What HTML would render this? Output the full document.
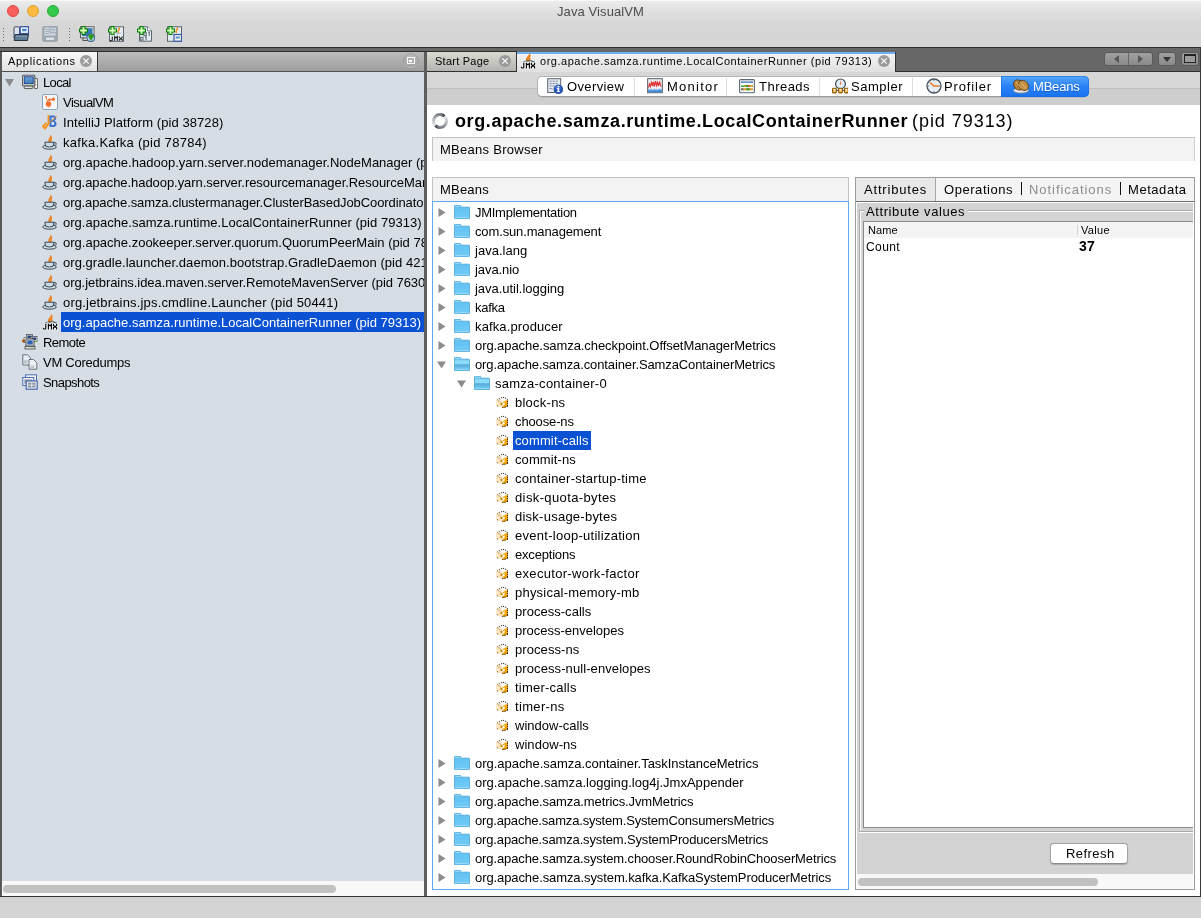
<!DOCTYPE html>
<html><head><meta charset="utf-8"><style>
html,body{margin:0;padding:0;width:1201px;height:918px;overflow:hidden;background:#d4d4d4;position:relative;font-family:"Liberation Sans", sans-serif;}
.t{position:absolute;white-space:nowrap;will-change:transform;font-family:"Liberation Sans", sans-serif;}
svg{overflow:visible}
</style></head><body>

<svg width="0" height="0" style="position:absolute">
<defs>
 <linearGradient id="gFold" x1="0" y1="0" x2="0" y2="1"><stop offset="0" stop-color="#a9def9"/><stop offset="0.45" stop-color="#8ccdf3"/><stop offset="0.5" stop-color="#5fb0e2"/><stop offset="1" stop-color="#7cc3ee"/></linearGradient>
 <symbol id="folder" viewBox="0 0 16 14">
   <path d="M0.5 1 Q0.5 0.3 1.2 0.3 H6.3 L7.3 2.2 H14.8 Q15.5 2.2 15.5 2.9 V13.1 Q15.5 13.7 14.9 13.7 H1.1 Q0.5 13.7 0.5 13.1 Z" fill="#6cc8f5" stroke="#56acdc" stroke-width="0.9"/>
   <rect x="1.2" y="1.1" width="5.2" height="1.1" fill="#98dbf9"/>
   <path d="M1 2.7 H15" stroke="#5bb2e2" stroke-width="0.7"/>
   <rect x="1" y="3.2" width="14" height="4" fill="#62c3f4" opacity="0.6"/>
   <rect x="1" y="11.9" width="14" height="1" fill="#9ad9f8"/>
 </symbol>
 <linearGradient id="gOpen" x1="0" y1="0" x2="0" y2="1"><stop offset="0" stop-color="#56acdb"/><stop offset="1" stop-color="#7ad0f7"/></linearGradient>
 <symbol id="folderopen" viewBox="0 0 16 14">
   <path d="M0.5 1 Q0.5 0.3 1.2 0.3 H6.3 L7.3 2.2 H14.8 Q15.5 2.2 15.5 2.9 V13.1 Q15.5 13.7 14.9 13.7 H1.1 Q0.5 13.7 0.5 13.1 Z" fill="#8edcfb" stroke="#56acdc" stroke-width="0.9"/>
   <path d="M1 2.7 H15" stroke="#5bb2e2" stroke-width="0.7"/>
   <rect x="0.5" y="7.6" width="15" height="5.8" rx="0.6" fill="url(#gOpen)" stroke="#56acdc" stroke-width="0.6"/>
   <rect x="1" y="11.9" width="14" height="1" fill="#8fd6f8"/>
 </symbol>
 <symbol id="bean" viewBox="0 0 12 12">
   <path d="M0.2 4 L5.5 1 L11.8 3.8 L11.8 10.5 L7 12 L0.2 10 Z" fill="#fde5bd"/>
   <path d="M7 6 L11.8 3.8 L11.8 10.5 L7 12 Z" fill="#f7a300"/>
   <path d="M3 3 L5.5 1 L10.5 3.2 L7 5.8 L4.5 4.6 Z" fill="#ffffff"/>
   <path d="M4.5 6.5 L6.3 7 L6.3 9.2 L4.5 8.7 Z" fill="#c77a00"/>
   <path d="M6.8 7.3 L8.8 6.5 L8.5 9 L7 9.7 Z" fill="#ffffff"/>
   <path d="M5 1.8 L7 1.2 L9.5 2.2 L11.5 3.5 L11.5 10.5" fill="none" stroke="#1e1a10" stroke-width="0.9" stroke-dasharray="1.2 0.9"/>
   <path d="M3.2 2.5 L5.2 4.2 M2.5 4.8 L4.5 5.8" stroke="#5a4a30" stroke-width="0.8" stroke-dasharray="1 1"/>
   <circle cx="1.4" cy="3.8" r="0.5" fill="#6a5a40"/><circle cx="3.2" cy="2.5" r="0.5" fill="#6a5a40"/>
   <circle cx="1.5" cy="9.8" r="0.6" fill="#6a5a40"/>
   <circle cx="6.8" cy="11.3" r="0.6" fill="#111"/><circle cx="9" cy="11.2" r="0.6" fill="#111"/><circle cx="11.3" cy="10.3" r="0.6" fill="#111"/>
 </symbol>
 <symbol id="java" viewBox="0 0 16 16">
   <path d="M8.2 0.5 C9.8 2 10.5 3.5 9.8 5 C9.3 6 10 7 9.5 8.2 L6.8 8.2 C6 7 6.2 5.5 7.2 4.2 C8 3.2 8.5 2 8.2 0.5 Z" fill="#ea7a12"/>
   <path d="M7.5 3.5 L9 4.5 M7 5.5 L8.8 6.3" stroke="#f7b36a" stroke-width="0.6"/>
   <ellipse cx="7.5" cy="13" rx="6.8" ry="2.2" fill="#cfe0ea" stroke="#3d4a52" stroke-width="1"/>
   <path d="M2.8 8.2 H12 L11 12.3 Q7.4 13.8 3.8 12.3 Z" fill="#c6dbe7" stroke="#3d4a52" stroke-width="1"/>
   <path d="M12 8.6 Q14.6 8.3 14.3 10.2 Q13.9 11.6 11.4 11.3" fill="none" stroke="#3d4a52" stroke-width="1"/>
 </symbol>
 <symbol id="jmx" viewBox="0 0 16 16">
   <path d="M9.6 0 C10.6 1.5 10.9 3 10.1 4.5 C10.6 5.5 10.9 7 10.1 8.6 L6.4 8.6 C5.7 7 5.9 5.5 6.9 4.2 C7.9 3 9.4 1.8 9.6 0 Z" fill="#ec7a10"/>
   <path d="M7.6 3.5 L9.4 4.5 M7.2 5.7 L9.2 6.5" stroke="#f6b06a" stroke-width="0.6"/>
   <path d="M3 9.6 Q9 5.8 15 9.6" fill="none" stroke="#56626c" stroke-width="1.3"/>
   <g fill="none" stroke-linecap="square">
   <path d="M3.8 10.3 V14.3 Q3.8 15 3 15 H1.8 L1.3 14.2 M6.4 15 V10.3 L7.9 11.8 L9.4 10.3 V15 M11.4 10.3 V11.4 L13 12.7 L14.6 11.4 V10.3 M11.4 15 V13.9 L13 12.7 L14.6 13.9 V15" stroke="#ffffff" stroke-width="2.4" opacity="0.85"/>
   <path d="M3.8 10.3 V14.3 Q3.8 15 3 15 H1.8 L1.3 14.2 M6.4 15 V10.3 L7.9 11.8 L9.4 10.3 V15 M11.4 10.3 V11.4 L13 12.7 L14.6 11.4 V10.3 M11.4 15 V13.9 L13 12.7 L14.6 13.9 V15" stroke="#000" stroke-width="1.15"/>
   </g>
 </symbol>

 <symbol id="plus" viewBox="0 0 9 9">
   <path d="M3 0.5 H6 V3 H8.5 V6 H6 V8.5 H3 V6 H0.5 V3 H3 Z" fill="#a8ee80" stroke="#077a07" stroke-width="1.1"/>
   <path d="M3.8 1.5 H5.2 V3.8 H7.5 V5.2 H5.2 V7.5 H3.8 V5.2 H1.5 V3.8 H3.8 Z" fill="#d8ffc0"/>
 </symbol>
 <symbol id="tb_open" viewBox="0 0 16 16">
   <path d="M1 2 Q1 0.8 2.2 0.8 H5.5 L6.5 1.8 V12 H1 Z" fill="#dbe4ee" stroke="#3e4c5a" stroke-width="1"/>
   <rect x="7.2" y="0.7" width="8.3" height="6.8" fill="#fff" stroke="#3856a6" stroke-width="1.3"/>
   <rect x="9" y="2.7" width="4.6" height="2.6" fill="#4a86cf"/>
   <path d="M1.2 14.5 L2 8.5 H15.5 L14.5 14.5 Z" fill="#5f7b96" stroke="#263647" stroke-width="1"/>
   <path d="M3 10.5 H14" stroke="#8aa3ba" stroke-width="0.8"/>
 </symbol>
 <symbol id="tb_save" viewBox="0 0 16 16">
   <path d="M0.8 1.5 Q0.8 0.8 1.5 0.8 H15.2 V14.5 Q15.2 15.2 14.5 15.2 H1.5 Q0.8 15.2 0.8 14.5 Z" fill="#a3adb6" stroke="#8f99a3" stroke-width="1"/>
   <rect x="2.5" y="1.5" width="11" height="8" fill="#cfd5db"/>
   <path d="M3.5 3.5 H7 M3.5 5.5 H7 M3.5 7.5 H7" stroke="#9aa3ab" stroke-width="0.8"/>
   <rect x="8" y="1.2" width="6.5" height="5.5" fill="#c9d0d8" stroke="#99a5b8" stroke-width="0.9"/>
   <rect x="9.5" y="3" width="3.5" height="1.8" fill="#a9b7c8"/>
   <rect x="3.5" y="11" width="9" height="3.5" rx="1" fill="#dde1e5" stroke="#8f99a3" stroke-width="0.8"/>
 </symbol>
 <symbol id="tb_host" viewBox="0 0 16 16">
   <rect x="1.5" y="0.8" width="13.5" height="11" fill="#f0f0f0" stroke="#5a5a5a" stroke-width="1"/>
   <rect x="3" y="2.2" width="10.5" height="8" fill="#3679b8"/>
   <path d="M4 12 V14.5 H11" fill="none" stroke="#555" stroke-width="1.2"/>
   <circle cx="11.8" cy="11.8" r="4" fill="#a9cbec" stroke="#2c4f7a" stroke-width="0.9"/>
   <path d="M9.2 9.5 Q10.5 8 12.5 8.2 Q14.8 8.8 15.2 10.5 Q14.5 11.5 13.5 12 Q13 13.5 12 15.2 Q11.3 14 11 12.8 Q9.5 12 9.2 9.5 Z" fill="#2e9a1c"/>
   <use href="#plus" x="0" y="0" width="9" height="9"/>
 </symbol>
 <symbol id="tb_jmx" viewBox="0 0 16 16">
   <rect x="1.5" y="0.8" width="14" height="14.5" fill="#e6edf5" stroke="#5c6670" stroke-width="1"/>
   <path d="M11 1.5 Q12 3 10.5 4.5 Q9.5 5.5 10.5 7" fill="none" stroke="#f28a1c" stroke-width="1.5"/>
   <path d="M8 8 L13 7" stroke="#86a8cc" stroke-width="0.8"/>
   <path d="M4.3 10.5 V14 Q4.3 14.8 3.5 14.8 H2.5 L2 14 M6.6 14.8 V10.5 L8 11.9 L9.4 10.5 V14.8 M11.3 10.5 V11.4 L12.8 12.6 L14.3 11.4 V10.5 M11.3 14.8 V13.8 L12.8 12.6 L14.3 13.8 V14.8" fill="none" stroke="#222" stroke-width="1.1"/>
   <use href="#plus" x="0" y="0" width="9" height="9"/>
 </symbol>
 <symbol id="tb_dump" viewBox="0 0 16 16">
   <path d="M2.5 0.8 H10.5 L14.5 4.8 V15.2 H2.5 Z" fill="#e8eef5" stroke="#5c6670" stroke-width="1"/>
   <path d="M10.5 0.8 V4.8 H14.5" fill="#fff" stroke="#5c6670" stroke-width="0.8"/>
   <g fill="none" stroke="#646d76" stroke-width="1.1">
   <rect x="6.8" y="6.8" width="2.4" height="2.8"/><path d="M11.2 6.6 L12.3 6.3 V9.8"/>
   <rect x="3.6" y="11.3" width="2.4" height="2.8"/><path d="M8 11.1 L9.1 10.8 V14.3"/>
   </g>
   <use href="#plus" x="0" y="0" width="9" height="9"/>
 </symbol>
 <symbol id="tb_snap" viewBox="0 0 16 16">
   <rect x="1.5" y="0.8" width="14" height="14.5" fill="#e4ebf3" stroke="#5c6670" stroke-width="1"/>
   <path d="M11 1.5 Q12 3 10.5 4.5 Q9.5 5.5 10.5 7" fill="none" stroke="#f28a1c" stroke-width="1.5"/>
   <rect x="8" y="8.5" width="7.5" height="6.7" fill="#f5f5ee" stroke="#3856a6" stroke-width="1.2"/>
   <rect x="9.7" y="10.5" width="4" height="2" fill="#5a90d0"/>
   <use href="#plus" x="0" y="0" width="9" height="9"/>
 </symbol>
 <linearGradient id="gScr" x1="0" y1="0" x2="0" y2="1"><stop offset="0" stop-color="#6aa6dc"/><stop offset="1" stop-color="#3d78b5"/></linearGradient>
 <symbol id="computer" viewBox="0 0 16 16">
   <rect x="12.3" y="4.5" width="3.3" height="10" rx="0.5" fill="#eeeeee" stroke="#555" stroke-width="0.9"/>
   <path d="M13.5 7 V8 M13.5 10 V11" stroke="#888" stroke-width="0.6"/>
   <rect x="2.2" y="12" width="8.6" height="2.6" rx="0.8" fill="#e2e2e2" stroke="#4a4a4a" stroke-width="0.9"/>
   <rect x="0.6" y="1.2" width="12.2" height="10.6" rx="0.6" fill="#f2efec" stroke="#5a5a5a" stroke-width="1.1"/>
   <rect x="2.2" y="2.8" width="9" height="7" fill="url(#gScr)" stroke="#0b2a80" stroke-width="0.8"/>
   <circle cx="9.6" cy="10.9" r="0.7" fill="#5ef020"/>
 </symbol>
 <symbol id="vvm" viewBox="0 0 16 16">
   <rect x="0.5" y="0.5" width="15" height="15" rx="1.5" fill="#f7f7f7" stroke="#7d9bbb" stroke-width="0.9"/>
   <circle cx="6.5" cy="10" r="2.8" fill="#f07033"/>
   <circle cx="7.5" cy="5.8" r="1.4" fill="#f07033"/>
   <circle cx="11.3" cy="5.3" r="1.7" fill="#f07033"/>
   <circle cx="4" cy="2.8" r="0.9" fill="#f07033"/>
   <path d="M4 2.8 L6 9 M7.5 5.8 L11.3 5.3 M6.5 10 L7 13.5" stroke="#f07033" stroke-width="0.9"/>
 </symbol>
 <symbol id="ij" viewBox="0 0 16 16">
   <path d="M6.5 1 V10 L3 14.5 L1 12.5 L4.5 9" fill="none" stroke="#f5920f" stroke-width="1.8"/>
   <path d="M7.5 1.5 H12 Q14.2 1.5 14.2 4 Q14.2 6 12.5 6.8 Q14.8 7.5 14.5 10.3 Q14.2 13 11.5 13 H7.5 Z" fill="#3f72d0"/>
   <rect x="9.5" y="3.5" width="2.3" height="2.3" fill="#d8e4f5"/>
   <rect x="9.5" y="8" width="2.6" height="3" fill="#d8e4f5"/>
   <path d="M5 11 L15 2" stroke="#f5920f" stroke-width="1"/>
 </symbol>
 <symbol id="remote" viewBox="0 0 16 16">
   <rect x="4.5" y="0.5" width="6" height="5" fill="#eaeaea" stroke="#555" stroke-width="0.8"/>
   <rect x="5.5" y="1.5" width="4" height="2.5" fill="#1d3f8a"/>
   <rect x="9" y="2.5" width="6" height="5" fill="#eaeaea" stroke="#555" stroke-width="0.8"/>
   <rect x="10" y="3.5" width="4" height="2.5" fill="#1d3f8a"/>
   <rect x="2" y="3.5" width="4" height="5" fill="#eaeaea" stroke="#777" stroke-width="0.8"/>
   <rect x="4" y="5" width="8" height="7" fill="#f0f0f0" stroke="#4a4a4a" stroke-width="1"/>
   <rect x="5.3" y="6.3" width="5.4" height="4.3" fill="#2f62b0"/>
   <rect x="3" y="12.5" width="10" height="2.5" fill="#dadada" stroke="#4a4a4a" stroke-width="0.8"/>
   <circle cx="1.5" cy="7" r="1.3" fill="#c7620a" stroke="#7a3a00" stroke-width="0.5"/>
   <rect x="13.3" y="7" width="1.5" height="1" fill="#40d010"/>
   <rect x="9.5" y="13.2" width="1.2" height="1" fill="#40d010"/>
 </symbol>
 <symbol id="coredump" viewBox="0 0 16 16">
   <path d="M0.8 0.8 H5.5 L8.5 3.8 V11 H0.8 Z" fill="#e4ebf2" stroke="#5e6770" stroke-width="0.9"/>
   <path d="M2 7 H6 M2 8.6 H5" stroke="#8c96a0" stroke-width="0.7"/>
   <path d="M7 5.5 H11.5 L14.8 8.8 V15.2 H7 Z" fill="#eef2f6" stroke="#5e6770" stroke-width="0.9"/>
   <path d="M8.5 12 H12.5 M8.5 13.6 H12" stroke="#8c96a0" stroke-width="0.7"/>
 </symbol>
 <symbol id="snapshot" viewBox="0 0 16 16">
   <rect x="3.5" y="0.8" width="11" height="8" fill="#f4f4ee" stroke="#4a6cb8" stroke-width="1"/>
   <rect x="0.8" y="3.5" width="11" height="8" fill="#f4f4ee" stroke="#4a6cb8" stroke-width="1"/>
   <rect x="2.3" y="5.3" width="8" height="4.5" fill="#9aa5b0"/>
   <rect x="4.2" y="7" width="11" height="8.2" fill="#f4f4ee" stroke="#3a5cae" stroke-width="1.1"/>
   <rect x="5.8" y="8.6" width="7.8" height="5" fill="#8c98a6"/>
   <path d="M5.8 11.1 H13.6 M9.7 8.6 V13.6" stroke="#e8ecf0" stroke-width="0.8"/>
 </symbol>
 <symbol id="v_overview" viewBox="0 0 16 16">
   <rect x="0.7" y="0.7" width="13" height="13.8" fill="#e4eaf1" stroke="#5a6570" stroke-width="1"/>
   <path d="M2.5 3.2 H11.5 M2.5 5.6 H10.5 M2.5 8 H8 M2.5 10.6 H6" stroke="#7f8c99" stroke-width="1" stroke-dasharray="2.2 0.8"/>
   <circle cx="11.4" cy="11.4" r="4.4" fill="#2a59c2" stroke="#173a8a" stroke-width="0.7"/>
   <ellipse cx="11" cy="9.5" rx="2.8" ry="1.6" fill="#6d95e0" opacity="0.6"/>
   <rect x="10.6" y="10.2" width="1.6" height="3.6" fill="#fff"/><rect x="9.9" y="13.2" width="3" height="0.8" fill="#fff"/><rect x="9.9" y="10.2" width="1.6" height="0.8" fill="#fff"/>
   <circle cx="11.4" cy="8.6" r="0.9" fill="#fff"/>
 </symbol>
 <symbol id="v_monitor" viewBox="0 0 16 16">
   <rect x="0.7" y="0.7" width="14.6" height="14" fill="#fbfcfd" stroke="#4d5560" stroke-width="1"/>
   <path d="M4 1 V14.5 M7 1 V14.5 M10 1 V14.5 M13 1 V14.5" stroke="#c5ced8" stroke-width="0.6"/>
   <path d="M1.5 9.5 L2.5 6 L3.5 8.5 L4.5 3.5 L5.5 8 L6.5 4 L7.5 8.5 L8.5 3 L9.5 7.5 L10.5 4.5 L11.5 8 L12.5 3.5 L13.5 7 L14.5 8.5" fill="none" stroke="#e03838" stroke-width="1.2"/>
   <path d="M1.2 14.3 V12 L2 10.5 L3 13 L4 10 L5 13 L6 10.5 L7 13 L8 10 L9 13 L10 10.5 L11 13 L12 10 L13 12.5 L14 10.5 L14.8 12 V14.3 Z" fill="#3d86d8"/>
 </symbol>
 <symbol id="v_threads" viewBox="0 0 16 16">
   <rect x="0.6" y="1.6" width="14.8" height="13.2" rx="1" fill="#f6f8fb" stroke="#5c6873" stroke-width="1.1"/>
   <rect x="2" y="3.4" width="12" height="1.5" fill="#4a78b0"/>
   <rect x="3.5" y="3.7" width="8" height="0.7" fill="#9ab8dc"/>
   <rect x="2" y="7.1" width="12" height="2" rx="0.8" fill="#2f9a22"/>
   <rect x="2.3" y="7.1" width="3" height="0.8" fill="#b9f0a0"/>
   <rect x="5.5" y="7.1" width="1.2" height="2" fill="#f0a830"/>
   <rect x="9" y="7.1" width="1.5" height="2" fill="#e05050"/>
   <rect x="10.5" y="7.1" width="3.5" height="2" rx="0.8" fill="#e0a030"/>
   <rect x="2" y="10.3" width="12" height="2" rx="0.8" fill="#d99a2a"/>
   <rect x="2" y="10.3" width="2.5" height="2" fill="#777"/>
   <rect x="7.5" y="10.3" width="3" height="2" fill="#2f9a22"/>
 </symbol>
 <symbol id="v_sampler" viewBox="0 0 16 16">
   <circle cx="8.5" cy="5.9" r="4.9" fill="#e2effb" stroke="#3e4855" stroke-width="1.2"/>
   <path d="M8.5 2.2 L9.2 5.5 L8.5 7.2 L7.8 5.5 Z" fill="#e8702a"/>
   <path d="M2 12.4 H14" stroke="#3e4855" stroke-width="1"/>
   <rect x="0.6" y="10.3" width="3.6" height="4.6" rx="0.6" fill="#f9cf72" stroke="#8a5200" stroke-width="1.1"/>
   <rect x="6.7" y="10.3" width="3.6" height="4.6" rx="0.6" fill="#f9cf72" stroke="#8a5200" stroke-width="1.1"/>
   <rect x="12.6" y="10.3" width="3.6" height="4.6" rx="0.6" fill="#f9cf72" stroke="#8a5200" stroke-width="1.1"/>
   <rect x="1.6" y="11.2" width="1.6" height="1.2" fill="#fff6dc"/><rect x="7.7" y="11.2" width="1.6" height="1.2" fill="#fff6dc"/><rect x="13.6" y="11.2" width="1.6" height="1.2" fill="#fff6dc"/>
 </symbol>
 <symbol id="v_profiler" viewBox="0 0 16 16">
   <circle cx="8" cy="8" r="7" fill="#e6eef6" stroke="#44505c" stroke-width="1.3"/>
   <path d="M8 2 V3 M8 13 V14 M2 8 H3 M13 8 H14" stroke="#555" stroke-width="0.8"/>
   <path d="M4.3 4.8 L8 8 L12.3 8" fill="none" stroke="#ea7420" stroke-width="1.5" stroke-linecap="round"/>
 </symbol>
 <symbol id="v_mbeans" viewBox="0 0 16 16">
   <ellipse cx="8" cy="12.5" rx="7.5" ry="2.6" fill="#e8e8e8" stroke="#8a8a8a" stroke-width="0.8"/>
   <ellipse cx="5.5" cy="7" rx="4.5" ry="5.5" transform="rotate(-40 5.5 7)" fill="#b8863a" stroke="#5a3a0a" stroke-width="0.8"/>
   <ellipse cx="10.5" cy="7.5" rx="4.5" ry="5.5" transform="rotate(-40 10.5 7.5)" fill="#c39045" stroke="#5a3a0a" stroke-width="0.8"/>
   <path d="M3 4 L8 10 M8 4.5 L13 10.5" stroke="#e8c880" stroke-width="0.8"/>
 </symbol>
 <symbol id="closec" viewBox="0 0 12 12">
   <circle cx="6" cy="6" r="6" fill="#9b9b9b"/>
   <path d="M3.3 3.3 L8.7 8.7 M8.7 3.3 L3.3 8.7" stroke="#fff" stroke-width="1.15"/>
 </symbol>
</defs>
</svg>

<div style="position:absolute;left:0px;top:0px;width:1201px;height:47px;background:linear-gradient(#ededed 0px,#e3e3e3 8px,#d7d7d7 22px,#d5d5d5 47px);"></div><div style="position:absolute;left:0px;top:0px;width:1201px;height:1px;background:#f7f7f7;"></div><div style="position:absolute;left:7px;top:5px;width:12px;height:12px;border-radius:50%;background:#fc605c;box-sizing:border-box;border:0.5px solid #df4744;"></div><div style="position:absolute;left:27px;top:5px;width:12px;height:12px;border-radius:50%;background:#fdbc40;box-sizing:border-box;border:0.5px solid #de9f34;"></div><div style="position:absolute;left:47px;top:5px;width:12px;height:12px;border-radius:50%;background:#34c84a;box-sizing:border-box;border:0.5px solid #27aa35;"></div><div class="t" style="left:556.5px;top:4.80px;font-size:13px;line-height:13px;font-weight:normal;color:#4d4d4d;letter-spacing:0.1px;">Java VisualVM</div><div style="position:absolute;left:3px;top:28px;width:1px;height:1px;background:#6b6b6b;"></div><div style="position:absolute;left:3px;top:31px;width:1px;height:1px;background:#6b6b6b;"></div><div style="position:absolute;left:3px;top:34px;width:1px;height:1px;background:#6b6b6b;"></div><div style="position:absolute;left:3px;top:37px;width:1px;height:1px;background:#6b6b6b;"></div><div style="position:absolute;left:3px;top:40px;width:1px;height:1px;background:#6b6b6b;"></div><div style="position:absolute;left:69px;top:28px;width:1px;height:1px;background:#6b6b6b;"></div><div style="position:absolute;left:69px;top:31px;width:1px;height:1px;background:#6b6b6b;"></div><div style="position:absolute;left:69px;top:34px;width:1px;height:1px;background:#6b6b6b;"></div><div style="position:absolute;left:69px;top:37px;width:1px;height:1px;background:#6b6b6b;"></div><div style="position:absolute;left:69px;top:40px;width:1px;height:1px;background:#6b6b6b;"></div><svg style="position:absolute;left:13px;top:26px" width="16" height="16"><use href="#tb_open"/></svg><svg style="position:absolute;left:42px;top:26px" width="16" height="16"><use href="#tb_save"/></svg><svg style="position:absolute;left:79px;top:26px" width="16" height="16"><use href="#tb_host"/></svg><svg style="position:absolute;left:108px;top:26px" width="16" height="16"><use href="#tb_jmx"/></svg><svg style="position:absolute;left:137px;top:26px" width="16" height="16"><use href="#tb_dump"/></svg><svg style="position:absolute;left:166px;top:26px" width="16" height="16"><use href="#tb_snap"/></svg><div style="position:absolute;left:0px;top:47px;width:1201px;height:1px;background:#2d2d2d;"></div><div style="position:absolute;left:0px;top:48px;width:1201px;height:3px;background:#686868;"></div><div style="position:absolute;left:0px;top:51px;width:517px;height:1px;background:#2d2d2d;"></div><div style="position:absolute;left:517px;top:51px;width:684px;height:1px;background:#686868;"></div><div style="position:absolute;left:0px;top:52px;width:2px;height:845px;background:#5d5d5d;"></div><div style="position:absolute;left:0px;top:52px;width:1px;height:845px;background:#565656;"></div><div style="position:absolute;left:2px;top:52px;width:422px;height:19px;background:linear-gradient(#bcbcbc,#9d9d9d);"></div><div style="position:absolute;left:2px;top:71px;width:422px;height:1px;background:#4f4f4f;"></div><div style="position:absolute;left:2px;top:52px;width:95px;height:19px;background:linear-gradient(#f8f8f8,#e2e2e2);"></div><div style="position:absolute;left:97px;top:52px;width:1px;height:19px;background:#333;"></div><div class="t" style="left:8.2px;top:56.39px;font-size:11px;line-height:11px;font-weight:normal;color:#000;letter-spacing:0.7px;">Applications</div><svg style="position:absolute;left:80px;top:55px" width="12" height="12"><use href="#closec"/></svg><svg style="position:absolute;left:402px;top:52px" width="18" height="18" viewBox="0 0 18 18"><circle cx="9" cy="9.1" r="7.4" fill="none" stroke="#8f8f8f" stroke-width="0.8" opacity="0.8"/><path d="M2.6 12 A7.4 7.4 0 0 0 15.4 12" fill="none" stroke="#c4c4c4" stroke-width="0.8"/></svg><div style="position:absolute;left:407px;top:57px;width:8px;height:7px;box-sizing:border-box;border:1px solid #fafafa;"></div><div style="position:absolute;left:409px;top:60px;width:3px;height:2px;background:#fafafa;"></div><div style="position:absolute;left:2px;top:72px;width:422px;height:809px;background:#d6dde5;"></div><div style="position:absolute;left:2px;top:881px;width:422px;height:15px;background:#f8f8f8;"></div><div style="position:absolute;left:3px;top:885px;width:333px;height:8px;background:#c2c2c2;border-radius:4px;"></div><div style="position:absolute;left:424px;top:52px;width:3px;height:845px;background:#5d5d5d;"></div><div style="position:absolute;left:61px;top:312px;width:363px;height:20px;background:#0b51d3;"></div><div style="position:absolute;left:2px;top:72px;width:422px;height:809px;overflow:hidden"><svg style="position:absolute;left:20px;top:2px" width="16" height="16"><use href="#computer"/></svg><div class="t" style="left:40.5px;top:3.90px;font-size:13px;line-height:13px;color:#000;letter-spacing:-0.65px">Local</div><svg style="position:absolute;left:40px;top:22px" width="16" height="16"><use href="#vvm"/></svg><div class="t" style="left:60.5px;top:23.90px;font-size:13px;line-height:13px;color:#000;letter-spacing:-0.543px">VisualVM</div><svg style="position:absolute;left:40px;top:42px" width="16" height="16"><use href="#ij"/></svg><div class="t" style="left:60.5px;top:43.90px;font-size:13px;line-height:13px;color:#000;letter-spacing:0.072px">IntelliJ Platform (pid 38728)</div><svg style="position:absolute;left:40px;top:62px" width="16" height="16"><use href="#java"/></svg><div class="t" style="left:60.5px;top:63.90px;font-size:13px;line-height:13px;color:#000;letter-spacing:0.282px">kafka.Kafka (pid 78784)</div><svg style="position:absolute;left:40px;top:82px" width="16" height="16"><use href="#java"/></svg><div class="t" style="left:60.5px;top:83.90px;font-size:13px;line-height:13px;color:#000;letter-spacing:0.006px">org.apache.hadoop.yarn.server.nodemanager.NodeManager (pid 78853)</div><svg style="position:absolute;left:40px;top:102px" width="16" height="16"><use href="#java"/></svg><div class="t" style="left:60.5px;top:103.90px;font-size:13px;line-height:13px;color:#000;letter-spacing:-0.056px">org.apache.hadoop.yarn.server.resourcemanager.ResourceManager (pid 78852)</div><svg style="position:absolute;left:40px;top:122px" width="16" height="16"><use href="#java"/></svg><div class="t" style="left:60.5px;top:123.90px;font-size:13px;line-height:13px;color:#000;letter-spacing:-0.092px">org.apache.samza.clustermanager.ClusterBasedJobCoordinator (pid 79210)</div><svg style="position:absolute;left:40px;top:142px" width="16" height="16"><use href="#java"/></svg><div class="t" style="left:60.5px;top:143.90px;font-size:13px;line-height:13px;color:#000;letter-spacing:0.028px">org.apache.samza.runtime.LocalContainerRunner (pid 79313)</div><svg style="position:absolute;left:40px;top:162px" width="16" height="16"><use href="#java"/></svg><div class="t" style="left:60.5px;top:163.90px;font-size:13px;line-height:13px;color:#000;letter-spacing:-0.001px">org.apache.zookeeper.server.quorum.QuorumPeerMain (pid 78712)</div><svg style="position:absolute;left:40px;top:182px" width="16" height="16"><use href="#java"/></svg><div class="t" style="left:60.5px;top:183.90px;font-size:13px;line-height:13px;color:#000;letter-spacing:0.046px">org.gradle.launcher.daemon.bootstrap.GradleDaemon (pid 42188)</div><svg style="position:absolute;left:40px;top:202px" width="16" height="16"><use href="#java"/></svg><div class="t" style="left:60.5px;top:203.90px;font-size:13px;line-height:13px;color:#000;letter-spacing:-0.059px">org.jetbrains.idea.maven.server.RemoteMavenServer (pid 76301)</div><svg style="position:absolute;left:40px;top:222px" width="16" height="16"><use href="#java"/></svg><div class="t" style="left:60.5px;top:223.90px;font-size:13px;line-height:13px;color:#000;letter-spacing:0.169px">org.jetbrains.jps.cmdline.Launcher (pid 50441)</div><svg style="position:absolute;left:40px;top:242px" width="16" height="16"><use href="#jmx"/></svg><div class="t" style="left:60.5px;top:243.90px;font-size:13px;line-height:13px;color:#fff;letter-spacing:0.021px">org.apache.samza.runtime.LocalContainerRunner (pid 79313)</div><svg style="position:absolute;left:20px;top:262px" width="16" height="16"><use href="#remote"/></svg><div class="t" style="left:40.5px;top:263.90px;font-size:13px;line-height:13px;color:#000;letter-spacing:-0.56px">Remote</div><svg style="position:absolute;left:20px;top:282px" width="16" height="16"><use href="#coredump"/></svg><div class="t" style="left:40.5px;top:283.90px;font-size:13px;line-height:13px;color:#000;letter-spacing:-0.255px">VM Coredumps</div><svg style="position:absolute;left:20px;top:302px" width="16" height="16"><use href="#snapshot"/></svg><div class="t" style="left:40.5px;top:303.90px;font-size:13px;line-height:13px;color:#000;letter-spacing:-0.577px">Snapshots</div></div><svg style="position:absolute;left:5px;top:79px" width="9" height="8" viewBox="0 0 9 8"><path d="M0 0 H9 L4.5 7.5 Z" fill="#8c8c8c"/></svg><div style="position:absolute;left:427px;top:52px;width:773px;height:19px;background:#676767;"></div><div style="position:absolute;left:427px;top:71px;width:773px;height:1px;background:#2f2f2f;"></div><div style="position:absolute;left:1200px;top:47px;width:1px;height:850px;background:#3a3a3a;"></div><div style="position:absolute;left:427px;top:52px;width:89px;height:19px;background:linear-gradient(#dbdbd1,#b3b3b1);"></div><div style="position:absolute;left:516px;top:52px;width:1px;height:20px;background:#333;"></div><div class="t" style="left:434.7px;top:55.69px;font-size:11px;line-height:11px;font-weight:normal;color:#000;letter-spacing:0.25px;">Start Page</div><svg style="position:absolute;left:499px;top:55px" width="12" height="12"><use href="#closec"/></svg><div style="position:absolute;left:517px;top:52px;width:378px;height:20px;background:linear-gradient(#f5f5f5,#e0e0e0);"></div><div style="position:absolute;left:517px;top:52px;width:378px;height:2px;background:#6eb0f6;"></div><div style="position:absolute;left:895px;top:52px;width:1px;height:20px;background:#333;"></div><svg style="position:absolute;left:520px;top:53px" width="16" height="16"><use href="#jmx"/></svg><div class="t" style="left:540px;top:55.69px;font-size:11px;line-height:11px;font-weight:normal;color:#000;letter-spacing:0.53px;">org.apache.samza.runtime.LocalContainerRunner (pid 79313)</div><svg style="position:absolute;left:878px;top:55px" width="12" height="12"><use href="#closec"/></svg><div style="position:absolute;left:1104px;top:52px;width:49px;height:14px;box-sizing:border-box;border:1px solid #5a5a5a;border-radius:3px;background:linear-gradient(#a0a0a0,#8a8a8a);"></div><div style="position:absolute;left:1158px;top:52px;width:18px;height:14px;box-sizing:border-box;border:1px solid #5a5a5a;border-radius:3px;background:linear-gradient(#a0a0a0,#8a8a8a);"></div><div style="position:absolute;left:1181px;top:52px;width:18px;height:14px;box-sizing:border-box;border:1px solid #5a5a5a;border-radius:3px;background:linear-gradient(#a0a0a0,#8a8a8a);"></div><div style="position:absolute;left:1128px;top:53px;width:1px;height:12px;background:#666;"></div><svg style="position:absolute;left:1114px;top:55px" width="6" height="8" viewBox="0 0 6 8"><path d="M5 0 V8 L0 4 Z" fill="#555"/></svg><svg style="position:absolute;left:1138px;top:55px" width="6" height="8" viewBox="0 0 6 8"><path d="M0 0 V8 L5 4 Z" fill="#555"/></svg><svg style="position:absolute;left:1163px;top:57px" width="8" height="5" viewBox="0 0 8 5"><path d="M0 0 H8 L4 5 Z" fill="#333"/></svg><div style="position:absolute;left:1184px;top:54px;width:12px;height:9px;box-sizing:border-box;border:1px solid #222;border-top-width:2px;background:#9a9a9a;"></div><div style="position:absolute;left:427px;top:72px;width:773px;height:16px;background:#d7d7d7;"></div><div style="position:absolute;left:427px;top:88px;width:773px;height:1px;background:#bfbfbf;"></div><div style="position:absolute;left:427px;top:89px;width:773px;height:16px;background:#cecece;"></div><div style="position:absolute;left:537px;top:76px;width:552px;height:21px;box-sizing:border-box;border:1px solid #b4b4b4;border-bottom-color:#9a9a9a;border-radius:5px;background:#fff;box-shadow:0 0.5px 0.5px rgba(0,0,0,0.15);"></div><div style="position:absolute;left:634px;top:78px;width:1px;height:18px;background:#dedede;"></div><div style="position:absolute;left:726px;top:78px;width:1px;height:18px;background:#dedede;"></div><div style="position:absolute;left:819px;top:78px;width:1px;height:18px;background:#dedede;"></div><div style="position:absolute;left:912px;top:78px;width:1px;height:18px;background:#dedede;"></div><div style="position:absolute;left:1001px;top:76px;width:88px;height:21px;border-radius:0 5px 5px 0;background:linear-gradient(#57a8fb,#2a82f5 50%,#1871f0);box-shadow:inset 0 0 0 0.5px #1466d8;"></div><svg style="position:absolute;left:547px;top:78px" width="16" height="16"><use href="#v_overview"/></svg><svg style="position:absolute;left:647px;top:78px" width="16" height="16"><use href="#v_monitor"/></svg><svg style="position:absolute;left:739px;top:78px" width="16" height="16"><use href="#v_threads"/></svg><svg style="position:absolute;left:832px;top:78px" width="16" height="16"><use href="#v_sampler"/></svg><svg style="position:absolute;left:926px;top:78px" width="16" height="16"><use href="#v_profiler"/></svg><svg style="position:absolute;left:1013px;top:78px" width="16" height="16"><use href="#v_mbeans"/></svg><div class="t" style="left:566.5px;top:79.75px;font-size:13px;line-height:13px;font-weight:normal;color:#000;letter-spacing:0.38px;">Overview</div><div class="t" style="left:666.5px;top:79.75px;font-size:13px;line-height:13px;font-weight:normal;color:#000;letter-spacing:1.25px;">Monitor</div><div class="t" style="left:759px;top:79.75px;font-size:13px;line-height:13px;font-weight:normal;color:#000;letter-spacing:0.48px;">Threads</div><div class="t" style="left:851px;top:79.75px;font-size:13px;line-height:13px;font-weight:normal;color:#000;letter-spacing:0.52px;">Sampler</div><div class="t" style="left:944px;top:79.75px;font-size:13px;line-height:13px;font-weight:normal;color:#000;letter-spacing:0.85px;">Profiler</div><div class="t" style="left:1032.5px;top:79.75px;font-size:13px;line-height:13px;font-weight:normal;color:#fff;letter-spacing:-0.2px;text-shadow:0 1px 0 rgba(0,40,120,0.35);">MBeans</div><div style="position:absolute;left:427px;top:105px;width:773px;height:791px;background:#fff;"></div><svg style="position:absolute;left:432px;top:113px" width="16" height="16" viewBox="0 0 16 16"><path d="M12.53 3.47 A6.4 6.4 0 0 0 11.60 2.71" fill="none" stroke="#383d4a" stroke-width="3"/><path d="M11.67 2.76 A6.4 6.4 0 0 0 10.62 2.16" fill="none" stroke="#424653" stroke-width="3"/><path d="M10.70 2.20 A6.4 6.4 0 0 0 9.57 1.80" fill="none" stroke="#4c505c" stroke-width="3"/><path d="M9.66 1.82 A6.4 6.4 0 0 0 8.47 1.62" fill="none" stroke="#565a65" stroke-width="3"/><path d="M8.56 1.62 A6.4 6.4 0 0 0 7.35 1.63" fill="none" stroke="#60646f" stroke-width="3"/><path d="M7.44 1.62 A6.4 6.4 0 0 0 6.26 1.84" fill="none" stroke="#6a6e78" stroke-width="3"/><path d="M6.34 1.82 A6.4 6.4 0 0 0 5.21 2.24" fill="none" stroke="#747781" stroke-width="3"/><path d="M5.30 2.20 A6.4 6.4 0 0 0 4.26 2.81" fill="none" stroke="#7e818b" stroke-width="3"/><path d="M4.33 2.76 A6.4 6.4 0 0 0 3.41 3.54" fill="none" stroke="#888b94" stroke-width="3"/><path d="M3.47 3.47 A6.4 6.4 0 0 0 2.71 4.40" fill="none" stroke="#92959d" stroke-width="3"/><path d="M2.76 4.33 A6.4 6.4 0 0 0 2.16 5.38" fill="none" stroke="#9c9fa6" stroke-width="3"/><path d="M2.20 5.30 A6.4 6.4 0 0 0 1.80 6.43" fill="none" stroke="#a6a9b0" stroke-width="3"/><path d="M1.82 6.34 A6.4 6.4 0 0 0 1.62 7.53" fill="none" stroke="#b0b2b9" stroke-width="3"/><path d="M1.62 7.44 A6.4 6.4 0 0 0 1.63 8.65" fill="none" stroke="#babcc2" stroke-width="3"/><path d="M1.62 8.56 A6.4 6.4 0 0 0 1.84 9.74" fill="none" stroke="#c4c6cc" stroke-width="3"/><path d="M1.82 9.66 A6.4 6.4 0 0 0 2.24 10.79" fill="none" stroke="#ced0d5" stroke-width="3"/><path d="M2.20 10.70 A6.4 6.4 0 0 0 2.81 11.74" fill="none" stroke="#d8dade" stroke-width="3"/><path d="M2.76 11.67 A6.4 6.4 0 0 0 3.54 12.59" fill="none" stroke="#e2e4e8" stroke-width="3"/><path d="M3.47 12.53 A6.4 6.4 0 0 0 4.40 13.29" fill="none" stroke="#383d4a" stroke-width="3"/><path d="M4.33 13.24 A6.4 6.4 0 0 0 5.38 13.84" fill="none" stroke="#424653" stroke-width="3"/><path d="M5.30 13.80 A6.4 6.4 0 0 0 6.43 14.20" fill="none" stroke="#4c505c" stroke-width="3"/><path d="M6.34 14.18 A6.4 6.4 0 0 0 7.53 14.38" fill="none" stroke="#565a65" stroke-width="3"/><path d="M7.44 14.38 A6.4 6.4 0 0 0 8.65 14.37" fill="none" stroke="#60646f" stroke-width="3"/><path d="M8.56 14.38 A6.4 6.4 0 0 0 9.74 14.16" fill="none" stroke="#6a6e78" stroke-width="3"/><path d="M9.66 14.18 A6.4 6.4 0 0 0 10.79 13.76" fill="none" stroke="#747781" stroke-width="3"/><path d="M10.70 13.80 A6.4 6.4 0 0 0 11.74 13.19" fill="none" stroke="#7e818b" stroke-width="3"/><path d="M11.67 13.24 A6.4 6.4 0 0 0 12.59 12.46" fill="none" stroke="#888b94" stroke-width="3"/><path d="M12.53 12.53 A6.4 6.4 0 0 0 13.29 11.60" fill="none" stroke="#92959d" stroke-width="3"/><path d="M13.24 11.67 A6.4 6.4 0 0 0 13.84 10.62" fill="none" stroke="#9c9fa6" stroke-width="3"/><path d="M13.80 10.70 A6.4 6.4 0 0 0 14.20 9.57" fill="none" stroke="#a6a9b0" stroke-width="3"/><path d="M14.18 9.66 A6.4 6.4 0 0 0 14.38 8.47" fill="none" stroke="#b0b2b9" stroke-width="3"/><path d="M14.38 8.56 A6.4 6.4 0 0 0 14.37 7.35" fill="none" stroke="#babcc2" stroke-width="3"/><path d="M14.38 7.44 A6.4 6.4 0 0 0 14.16 6.26" fill="none" stroke="#c4c6cc" stroke-width="3"/><path d="M14.18 6.34 A6.4 6.4 0 0 0 13.76 5.21" fill="none" stroke="#ced0d5" stroke-width="3"/><path d="M13.80 5.30 A6.4 6.4 0 0 0 13.19 4.26" fill="none" stroke="#d8dade" stroke-width="3"/><path d="M13.24 4.33 A6.4 6.4 0 0 0 12.46 3.41" fill="none" stroke="#e2e4e8" stroke-width="3"/></svg><div class="t" style="left:454.7px;top:112.26px;font-size:18px;line-height:18px;font-weight:bold;color:#000;letter-spacing:0.6px;">org.apache.samza.runtime.LocalContainerRunner</div><div class="t" style="left:912px;top:112.26px;font-size:18px;line-height:18px;font-weight:normal;color:#000;letter-spacing:0.95px;">(pid 79313)</div><div style="position:absolute;left:432px;top:137px;width:763px;height:24px;box-sizing:border-box;border-top:1px solid #c4c4c4;border-left:1px solid #c4c4c4;border-right:1px solid #d0d0d0;background:#f3f3f3;"></div><div class="t" style="left:440px;top:142.80px;font-size:13px;line-height:13px;font-weight:normal;color:#000;letter-spacing:0.27px;">MBeans Browser</div><div style="position:absolute;left:432px;top:177px;width:417px;height:25px;box-sizing:border-box;border:1px solid #c4c4c4;border-bottom:none;background:#f3f3f3;"></div><div class="t" style="left:440px;top:182.50px;font-size:13px;line-height:13px;font-weight:normal;color:#000;letter-spacing:0.2px;">MBeans</div><div style="position:absolute;left:432px;top:201px;width:417px;height:689px;box-sizing:border-box;border:1px solid #62a8ef;background:#fff;"></div><svg style="position:absolute;left:438px;top:208px" width="8" height="9" viewBox="0 0 8 9"><path d="M0.5 0 L7.5 4.5 L0.5 9 Z" fill="#8c8c8c"/></svg><svg style="position:absolute;left:454px;top:205px" width="16" height="14"><use href="#folder"/></svg><div class="t" style="left:474.5px;top:205.60px;font-size:13px;line-height:13px;font-weight:normal;color:#000;letter-spacing:-0.274px;">JMImplementation</div><svg style="position:absolute;left:438px;top:227px" width="8" height="9" viewBox="0 0 8 9"><path d="M0.5 0 L7.5 4.5 L0.5 9 Z" fill="#8c8c8c"/></svg><svg style="position:absolute;left:454px;top:224px" width="16" height="14"><use href="#folder"/></svg><div class="t" style="left:474.5px;top:224.60px;font-size:13px;line-height:13px;font-weight:normal;color:#000;letter-spacing:-0.135px;">com.sun.management</div><svg style="position:absolute;left:438px;top:246px" width="8" height="9" viewBox="0 0 8 9"><path d="M0.5 0 L7.5 4.5 L0.5 9 Z" fill="#8c8c8c"/></svg><svg style="position:absolute;left:454px;top:243px" width="16" height="14"><use href="#folder"/></svg><div class="t" style="left:474.5px;top:243.60px;font-size:13px;line-height:13px;font-weight:normal;color:#000;letter-spacing:0.025px;">java.lang</div><svg style="position:absolute;left:438px;top:265px" width="8" height="9" viewBox="0 0 8 9"><path d="M0.5 0 L7.5 4.5 L0.5 9 Z" fill="#8c8c8c"/></svg><svg style="position:absolute;left:454px;top:262px" width="16" height="14"><use href="#folder"/></svg><div class="t" style="left:474.5px;top:262.60px;font-size:13px;line-height:13px;font-weight:normal;color:#000;letter-spacing:-0.073px;">java.nio</div><svg style="position:absolute;left:438px;top:284px" width="8" height="9" viewBox="0 0 8 9"><path d="M0.5 0 L7.5 4.5 L0.5 9 Z" fill="#8c8c8c"/></svg><svg style="position:absolute;left:454px;top:281px" width="16" height="14"><use href="#folder"/></svg><div class="t" style="left:474.5px;top:281.60px;font-size:13px;line-height:13px;font-weight:normal;color:#000;letter-spacing:-0.026px;">java.util.logging</div><svg style="position:absolute;left:438px;top:303px" width="8" height="9" viewBox="0 0 8 9"><path d="M0.5 0 L7.5 4.5 L0.5 9 Z" fill="#8c8c8c"/></svg><svg style="position:absolute;left:454px;top:300px" width="16" height="14"><use href="#folder"/></svg><div class="t" style="left:474.5px;top:300.60px;font-size:13px;line-height:13px;font-weight:normal;color:#000;letter-spacing:-0.25px;">kafka</div><svg style="position:absolute;left:438px;top:322px" width="8" height="9" viewBox="0 0 8 9"><path d="M0.5 0 L7.5 4.5 L0.5 9 Z" fill="#8c8c8c"/></svg><svg style="position:absolute;left:454px;top:319px" width="16" height="14"><use href="#folder"/></svg><div class="t" style="left:474.5px;top:319.60px;font-size:13px;line-height:13px;font-weight:normal;color:#000;letter-spacing:0.131px;">kafka.producer</div><svg style="position:absolute;left:438px;top:341px" width="8" height="9" viewBox="0 0 8 9"><path d="M0.5 0 L7.5 4.5 L0.5 9 Z" fill="#8c8c8c"/></svg><svg style="position:absolute;left:454px;top:338px" width="16" height="14"><use href="#folder"/></svg><div class="t" style="left:474.5px;top:338.60px;font-size:13px;line-height:13px;font-weight:normal;color:#000;letter-spacing:-0.07px;">org.apache.samza.checkpoint.OffsetManagerMetrics</div><svg style="position:absolute;left:437px;top:361px" width="9" height="8" viewBox="0 0 9 8"><path d="M0 0.5 H9 L4.5 7.5 Z" fill="#8c8c8c"/></svg><svg style="position:absolute;left:454px;top:357px" width="16" height="14"><use href="#folderopen"/></svg><div class="t" style="left:474.5px;top:357.60px;font-size:13px;line-height:13px;font-weight:normal;color:#000;letter-spacing:-0.113px;">org.apache.samza.container.SamzaContainerMetrics</div><svg style="position:absolute;left:457px;top:380px" width="9" height="8" viewBox="0 0 9 8"><path d="M0 0.5 H9 L4.5 7.5 Z" fill="#8c8c8c"/></svg><svg style="position:absolute;left:474px;top:376px" width="16" height="14"><use href="#folderopen"/></svg><div class="t" style="left:494.5px;top:376.60px;font-size:13px;line-height:13px;font-weight:normal;color:#000;letter-spacing:0.251px;">samza-container-0</div><svg style="position:absolute;left:496px;top:396px" width="12" height="12"><use href="#bean"/></svg><div class="t" style="left:514.5px;top:395.60px;font-size:13px;line-height:13px;font-weight:normal;color:#000;letter-spacing:0.242px;">block-ns</div><svg style="position:absolute;left:496px;top:415px" width="12" height="12"><use href="#bean"/></svg><div class="t" style="left:514.5px;top:414.60px;font-size:13px;line-height:13px;font-weight:normal;color:#000;letter-spacing:-0.125px;">choose-ns</div><svg style="position:absolute;left:496px;top:434px" width="12" height="12"><use href="#bean"/></svg><div style="position:absolute;left:513px;top:431px;width:78px;height:19px;background:#0b51d3;"></div><div class="t" style="left:514.5px;top:433.60px;font-size:13px;line-height:13px;font-weight:normal;color:#fff;letter-spacing:0.12px;">commit-calls</div><svg style="position:absolute;left:496px;top:453px" width="12" height="12"><use href="#bean"/></svg><div class="t" style="left:514.5px;top:452.60px;font-size:13px;line-height:13px;font-weight:normal;color:#000;letter-spacing:0.098px;">commit-ns</div><svg style="position:absolute;left:496px;top:472px" width="12" height="12"><use href="#bean"/></svg><div class="t" style="left:514.5px;top:471.60px;font-size:13px;line-height:13px;font-weight:normal;color:#000;letter-spacing:0.243px;">container-startup-time</div><svg style="position:absolute;left:496px;top:491px" width="12" height="12"><use href="#bean"/></svg><div class="t" style="left:514.5px;top:490.60px;font-size:13px;line-height:13px;font-weight:normal;color:#000;letter-spacing:0.38px;">disk-quota-bytes</div><svg style="position:absolute;left:496px;top:510px" width="12" height="12"><use href="#bean"/></svg><div class="t" style="left:514.5px;top:509.60px;font-size:13px;line-height:13px;font-weight:normal;color:#000;letter-spacing:0.246px;">disk-usage-bytes</div><svg style="position:absolute;left:496px;top:529px" width="12" height="12"><use href="#bean"/></svg><div class="t" style="left:514.5px;top:528.60px;font-size:13px;line-height:13px;font-weight:normal;color:#000;letter-spacing:0.272px;">event-loop-utilization</div><svg style="position:absolute;left:496px;top:548px" width="12" height="12"><use href="#bean"/></svg><div class="t" style="left:514.5px;top:547.60px;font-size:13px;line-height:13px;font-weight:normal;color:#000;letter-spacing:-0.19px;">exceptions</div><svg style="position:absolute;left:496px;top:567px" width="12" height="12"><use href="#bean"/></svg><div class="t" style="left:514.5px;top:566.60px;font-size:13px;line-height:13px;font-weight:normal;color:#000;letter-spacing:0.31px;">executor-work-factor</div><svg style="position:absolute;left:496px;top:586px" width="12" height="12"><use href="#bean"/></svg><div class="t" style="left:514.5px;top:585.60px;font-size:13px;line-height:13px;font-weight:normal;color:#000;letter-spacing:0.218px;">physical-memory-mb</div><svg style="position:absolute;left:496px;top:605px" width="12" height="12"><use href="#bean"/></svg><div class="t" style="left:514.5px;top:604.60px;font-size:13px;line-height:13px;font-weight:normal;color:#000;letter-spacing:0.033px;">process-calls</div><svg style="position:absolute;left:496px;top:624px" width="12" height="12"><use href="#bean"/></svg><div class="t" style="left:514.5px;top:623.60px;font-size:13px;line-height:13px;font-weight:normal;color:#000;letter-spacing:-0.013px;">process-envelopes</div><svg style="position:absolute;left:496px;top:643px" width="12" height="12"><use href="#bean"/></svg><div class="t" style="left:514.5px;top:642.60px;font-size:13px;line-height:13px;font-weight:normal;color:#000;letter-spacing:0.077px;">process-ns</div><svg style="position:absolute;left:496px;top:662px" width="12" height="12"><use href="#bean"/></svg><div class="t" style="left:514.5px;top:661.60px;font-size:13px;line-height:13px;font-weight:normal;color:#000;letter-spacing:0.09px;">process-null-envelopes</div><svg style="position:absolute;left:496px;top:681px" width="12" height="12"><use href="#bean"/></svg><div class="t" style="left:514.5px;top:680.60px;font-size:13px;line-height:13px;font-weight:normal;color:#000;letter-spacing:0.22px;">timer-calls</div><svg style="position:absolute;left:496px;top:700px" width="12" height="12"><use href="#bean"/></svg><div class="t" style="left:514.5px;top:699.60px;font-size:13px;line-height:13px;font-weight:normal;color:#000;letter-spacing:0.329px;">timer-ns</div><svg style="position:absolute;left:496px;top:719px" width="12" height="12"><use href="#bean"/></svg><div class="t" style="left:514.5px;top:718.60px;font-size:13px;line-height:13px;font-weight:normal;color:#000;letter-spacing:0.008px;">window-calls</div><svg style="position:absolute;left:496px;top:738px" width="12" height="12"><use href="#bean"/></svg><div class="t" style="left:514.5px;top:737.60px;font-size:13px;line-height:13px;font-weight:normal;color:#000;letter-spacing:0.048px;">window-ns</div><svg style="position:absolute;left:438px;top:759px" width="8" height="9" viewBox="0 0 8 9"><path d="M0.5 0 L7.5 4.5 L0.5 9 Z" fill="#8c8c8c"/></svg><svg style="position:absolute;left:454px;top:756px" width="16" height="14"><use href="#folder"/></svg><div class="t" style="left:474.5px;top:756.60px;font-size:13px;line-height:13px;font-weight:normal;color:#000;letter-spacing:-0.029px;">org.apache.samza.container.TaskInstanceMetrics</div><svg style="position:absolute;left:438px;top:778px" width="8" height="9" viewBox="0 0 8 9"><path d="M0.5 0 L7.5 4.5 L0.5 9 Z" fill="#8c8c8c"/></svg><svg style="position:absolute;left:454px;top:775px" width="16" height="14"><use href="#folder"/></svg><div class="t" style="left:474.5px;top:775.60px;font-size:13px;line-height:13px;font-weight:normal;color:#000;letter-spacing:0.027px;">org.apache.samza.logging.log4j.JmxAppender</div><svg style="position:absolute;left:438px;top:797px" width="8" height="9" viewBox="0 0 8 9"><path d="M0.5 0 L7.5 4.5 L0.5 9 Z" fill="#8c8c8c"/></svg><svg style="position:absolute;left:454px;top:794px" width="16" height="14"><use href="#folder"/></svg><div class="t" style="left:474.5px;top:794.60px;font-size:13px;line-height:13px;font-weight:normal;color:#000;letter-spacing:-0.1px;">org.apache.samza.metrics.JvmMetrics</div><svg style="position:absolute;left:438px;top:816px" width="8" height="9" viewBox="0 0 8 9"><path d="M0.5 0 L7.5 4.5 L0.5 9 Z" fill="#8c8c8c"/></svg><svg style="position:absolute;left:454px;top:813px" width="16" height="14"><use href="#folder"/></svg><div class="t" style="left:474.5px;top:813.60px;font-size:13px;line-height:13px;font-weight:normal;color:#000;letter-spacing:-0.172px;">org.apache.samza.system.SystemConsumersMetrics</div><svg style="position:absolute;left:438px;top:835px" width="8" height="9" viewBox="0 0 8 9"><path d="M0.5 0 L7.5 4.5 L0.5 9 Z" fill="#8c8c8c"/></svg><svg style="position:absolute;left:454px;top:832px" width="16" height="14"><use href="#folder"/></svg><div class="t" style="left:474.5px;top:832.60px;font-size:13px;line-height:13px;font-weight:normal;color:#000;letter-spacing:-0.144px;">org.apache.samza.system.SystemProducersMetrics</div><svg style="position:absolute;left:438px;top:854px" width="8" height="9" viewBox="0 0 8 9"><path d="M0.5 0 L7.5 4.5 L0.5 9 Z" fill="#8c8c8c"/></svg><svg style="position:absolute;left:454px;top:851px" width="16" height="14"><use href="#folder"/></svg><div class="t" style="left:474.5px;top:851.60px;font-size:13px;line-height:13px;font-weight:normal;color:#000;letter-spacing:-0.118px;">org.apache.samza.system.chooser.RoundRobinChooserMetrics</div><svg style="position:absolute;left:438px;top:873px" width="8" height="9" viewBox="0 0 8 9"><path d="M0.5 0 L7.5 4.5 L0.5 9 Z" fill="#8c8c8c"/></svg><svg style="position:absolute;left:454px;top:870px" width="16" height="14"><use href="#folder"/></svg><div class="t" style="left:474.5px;top:870.60px;font-size:13px;line-height:13px;font-weight:normal;color:#000;letter-spacing:-0.092px;">org.apache.samza.system.kafka.KafkaSystemProducerMetrics</div><div style="position:absolute;left:855px;top:177px;width:340px;height:713px;box-sizing:border-box;border:1px solid #9c9c9c;background:#fff;"></div><div style="position:absolute;left:856px;top:178px;width:338px;height:23px;background:#f4f4f4;"></div><div style="position:absolute;left:856px;top:178px;width:80px;height:23px;background:#e8e8e8;"></div><div style="position:absolute;left:935px;top:178px;width:1px;height:23px;background:#a6a6a6;"></div><div style="position:absolute;left:856px;top:201px;width:338px;height:1px;background:#6e6e6e;"></div><div class="t" style="left:864.3px;top:182.70px;font-size:13px;line-height:13px;font-weight:normal;color:#000;letter-spacing:0.82px;">Attributes</div><div class="t" style="left:943.5px;top:182.70px;font-size:13px;line-height:13px;font-weight:normal;color:#000;letter-spacing:0.55px;">Operations</div><div style="position:absolute;left:1021px;top:182px;width:1px;height:13px;background:#111;"></div><div class="t" style="left:1029px;top:182.70px;font-size:13px;line-height:13px;font-weight:normal;color:#8c8c8c;letter-spacing:0.95px;">Notifications</div><div style="position:absolute;left:1120px;top:182px;width:1px;height:13px;background:#111;"></div><div class="t" style="left:1128px;top:182.70px;font-size:13px;line-height:13px;font-weight:normal;color:#000;letter-spacing:0.55px;">Metadata</div><div style="position:absolute;left:857px;top:203px;width:336px;height:686px;background:#d3d3d3;"></div><div style="position:absolute;left:859px;top:210px;width:334px;height:1px;background:#a9a9a9;"></div><div style="position:absolute;left:860px;top:211px;width:333px;height:1px;background:#fff;"></div><div style="position:absolute;left:859px;top:210px;width:1px;height:622px;background:#a9a9a9;"></div><div style="position:absolute;left:860px;top:211px;width:1px;height:621px;background:#fff;"></div><div style="position:absolute;left:859px;top:831px;width:334px;height:1px;background:#a9a9a9;"></div><div style="position:absolute;left:859px;top:832px;width:334px;height:1px;background:#fff;"></div><div style="position:absolute;left:864px;top:204px;width:104px;height:17px;background:#d3d3d3;"></div><div class="t" style="left:866.3px;top:204.90px;font-size:13px;line-height:13px;font-weight:normal;color:#000;letter-spacing:0.6px;">Attribute values</div><div style="position:absolute;left:863px;top:221px;width:330px;height:607px;box-sizing:border-box;border:1px solid #8a8a8a;border-right:none;background:#fff;"></div><div style="position:absolute;left:864px;top:222px;width:329px;height:16px;background:#f4f4f4;"></div><div style="position:absolute;left:1077px;top:225px;width:1px;height:10px;background:#d2d2d2;"></div><div class="t" style="left:867.5px;top:224.59px;font-size:11px;line-height:11px;font-weight:normal;color:#000;letter-spacing:0.1px;">Name</div><div class="t" style="left:1081px;top:225.49px;font-size:11px;line-height:11px;font-weight:normal;color:#000;letter-spacing:0.3px;">Value</div><div class="t" style="left:865.7px;top:240.74px;font-size:12px;line-height:12px;font-weight:normal;color:#000;letter-spacing:0.4px;">Count</div><div class="t" style="left:1078.5px;top:238.65px;font-size:14px;line-height:14px;font-weight:bold;color:#000;letter-spacing:0.3px;">37</div><div style="position:absolute;left:1050px;top:843px;width:78px;height:21px;box-sizing:border-box;border:1px solid #a4a4a4;border-bottom-color:#8d8d8d;border-radius:4px;background:#fff;box-shadow:0 0.5px 1px rgba(0,0,0,0.2);"></div><div class="t" style="left:1065.7px;top:846.90px;font-size:13px;line-height:13px;font-weight:normal;color:#000;letter-spacing:0.45px;">Refresh</div><div style="position:absolute;left:857px;top:874px;width:336px;height:15px;background:#f8f8f8;"></div><div style="position:absolute;left:858px;top:878px;width:240px;height:8px;background:#c1c1c1;border-radius:4px;"></div><div style="position:absolute;left:0px;top:896px;width:1201px;height:1px;background:#333;"></div><div style="position:absolute;left:0px;top:897px;width:1201px;height:21px;background:#d4d4d4;"></div>
</body></html>
